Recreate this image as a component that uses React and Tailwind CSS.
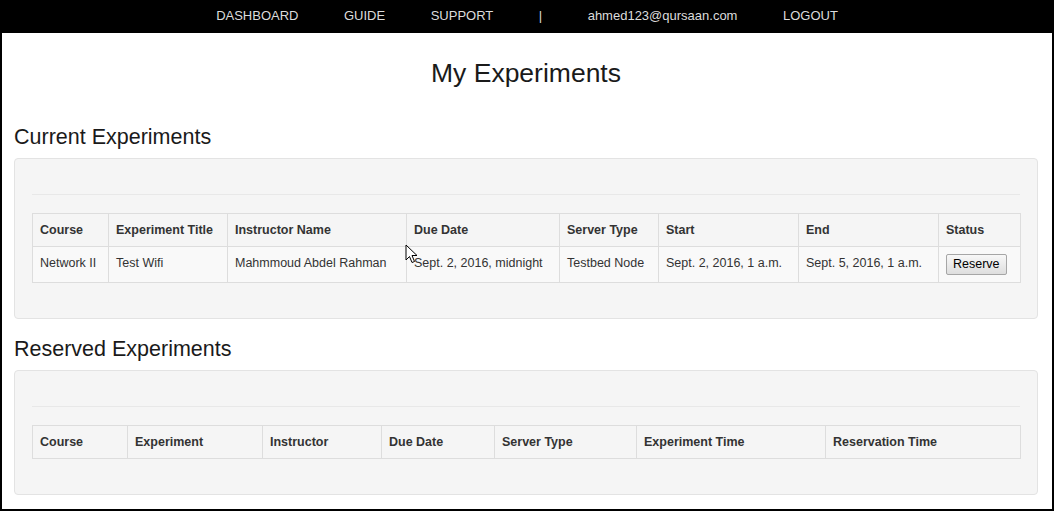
import React from "react";

const navItems = ["DASHBOARD", "GUIDE", "SUPPORT", "|", "ahmed123@qursaan.com", "LOGOUT"];

const currentCols = [
  { label: "Course", w: "w-[76px]" },
  { label: "Experiment Title", w: "w-[119px]" },
  { label: "Instructor Name", w: "w-[179px]" },
  { label: "Due Date", w: "w-[153px]" },
  { label: "Server Type", w: "w-[99px]" },
  { label: "Start", w: "w-[140px]" },
  { label: "End", w: "w-[140px]" },
  { label: "Status", w: "w-[82px]" },
];

const reservedCols = [
  { label: "Course", w: "w-[95px]" },
  { label: "Experiment", w: "w-[135px]" },
  { label: "Instructor", w: "w-[119px]" },
  { label: "Due Date", w: "w-[113px]" },
  { label: "Server Type", w: "w-[142px]" },
  { label: "Experiment Time", w: "w-[189px]" },
  { label: "Reservation Time", w: "w-[195px]" },
];

const currentRows = [
  {
    course: "Network II",
    title: "Test Wifi",
    instructor: "Mahmmoud Abdel Rahman",
    due: "Sept. 2, 2016, midnight",
    server: "Testbed Node",
    start: "Sept. 2, 2016, 1 a.m.",
    end: "Sept. 5, 2016, 1 a.m.",
  },
];

const th = "border border-[#dddddd] px-[7px] py-[7px] text-left font-bold leading-[18px] align-top";
const td = "border border-[#dddddd] px-[7px] pt-[8px] pb-[7px] leading-[17px] align-top whitespace-nowrap";

function Well({ children }) {
  return (
    <div className="rounded-[4px] border border-[#e3e3e3] bg-[#f5f5f5] px-[17px] py-[17px]">
      <hr className="mt-[18px] mb-[18px] border-t border-[#e8e8e8]" />
      {children}
    </div>
  );
}

function Header({ cols }) {
  return (
    <>
      <colgroup>
        {cols.map((c) => (
          <col key={c.label} className={c.w} />
        ))}
      </colgroup>
      <thead>
        <tr>
          {cols.map((c) => (
            <th key={c.label} className={th}>
              {c.label}
            </th>
          ))}
        </tr>
      </thead>
    </>
  );
}

function Cursor() {
  return (
    <svg className="absolute left-[403px] top-[244px]" width="13" height="20" viewBox="0 0 13 20">
      <path
        d="M1 1 L1 16 L4.5 12.5 L7 18.5 L9.5 17.5 L7 11.5 L12 11.5 Z"
        fill="#ffffff"
        stroke="#000000"
        strokeWidth="1"
        strokeLinejoin="round"
      />
    </svg>
  );
}

export default function App() {
  return (
    <div
      className="relative h-[511px] border-x-2 border-b-2 border-black bg-white text-[#333333]"
      style={{ fontFamily: '"Liberation Sans", Arial, sans-serif' }}
    >
      {/* top nav */}
      <nav className="flex h-[33px] items-center justify-center gap-[45.5px] bg-black pb-[2px] text-[13px] text-[#dcdcdc]">
        {navItems.map((item, i) => (
          <span key={i}>{item}</span>
        ))}
      </nav>

      <div className="pl-3 pr-[14px]">
        <h1 className="mt-[25px] text-center text-[26.5px] leading-[30px] text-[#1a1a1a]">My Experiments</h1>

        <h3 className="mt-[37px] mb-[9px] text-[21.5px] leading-[24px] text-[#1a1a1a]">Current Experiments</h3>
        <Well>
          <table className="mb-[18px] w-full table-fixed border-collapse text-[12.5px]">
            <Header cols={currentCols} />
            <tbody>
              {currentRows.map((r, i) => (
                <tr key={i} className="bg-[#f9f9f9]">
                  <td className={td}>{r.course}</td>
                  <td className={td}>{r.title}</td>
                  <td className={td}>{r.instructor}</td>
                  <td className={td}>{r.due}</td>
                  <td className={td}>{r.server}</td>
                  <td className={td}>{r.start}</td>
                  <td className={td}>{r.end}</td>
                  <td className="border border-[#dddddd] px-[7px] py-[7px] align-top">
                    <button className="h-[21px] rounded-[2px] border border-[#a6a6a6] bg-gradient-to-b from-[#f8f8f8] to-[#dedede] px-[6px] text-[12.5px] leading-[19px] text-black">
                      Reserve
                    </button>
                  </td>
                </tr>
              ))}
            </tbody>
          </table>
        </Well>

        <h3 className="mt-[18px] mb-[9px] text-[21.5px] leading-[24px] text-[#1a1a1a]">Reserved Experiments</h3>
        <Well>
          <table className="mb-[18px] w-full table-fixed border-collapse text-[12.5px]">
            <Header cols={reservedCols} />
            <tbody></tbody>
          </table>
        </Well>
      </div>

      <Cursor />
    </div>
  );
}
